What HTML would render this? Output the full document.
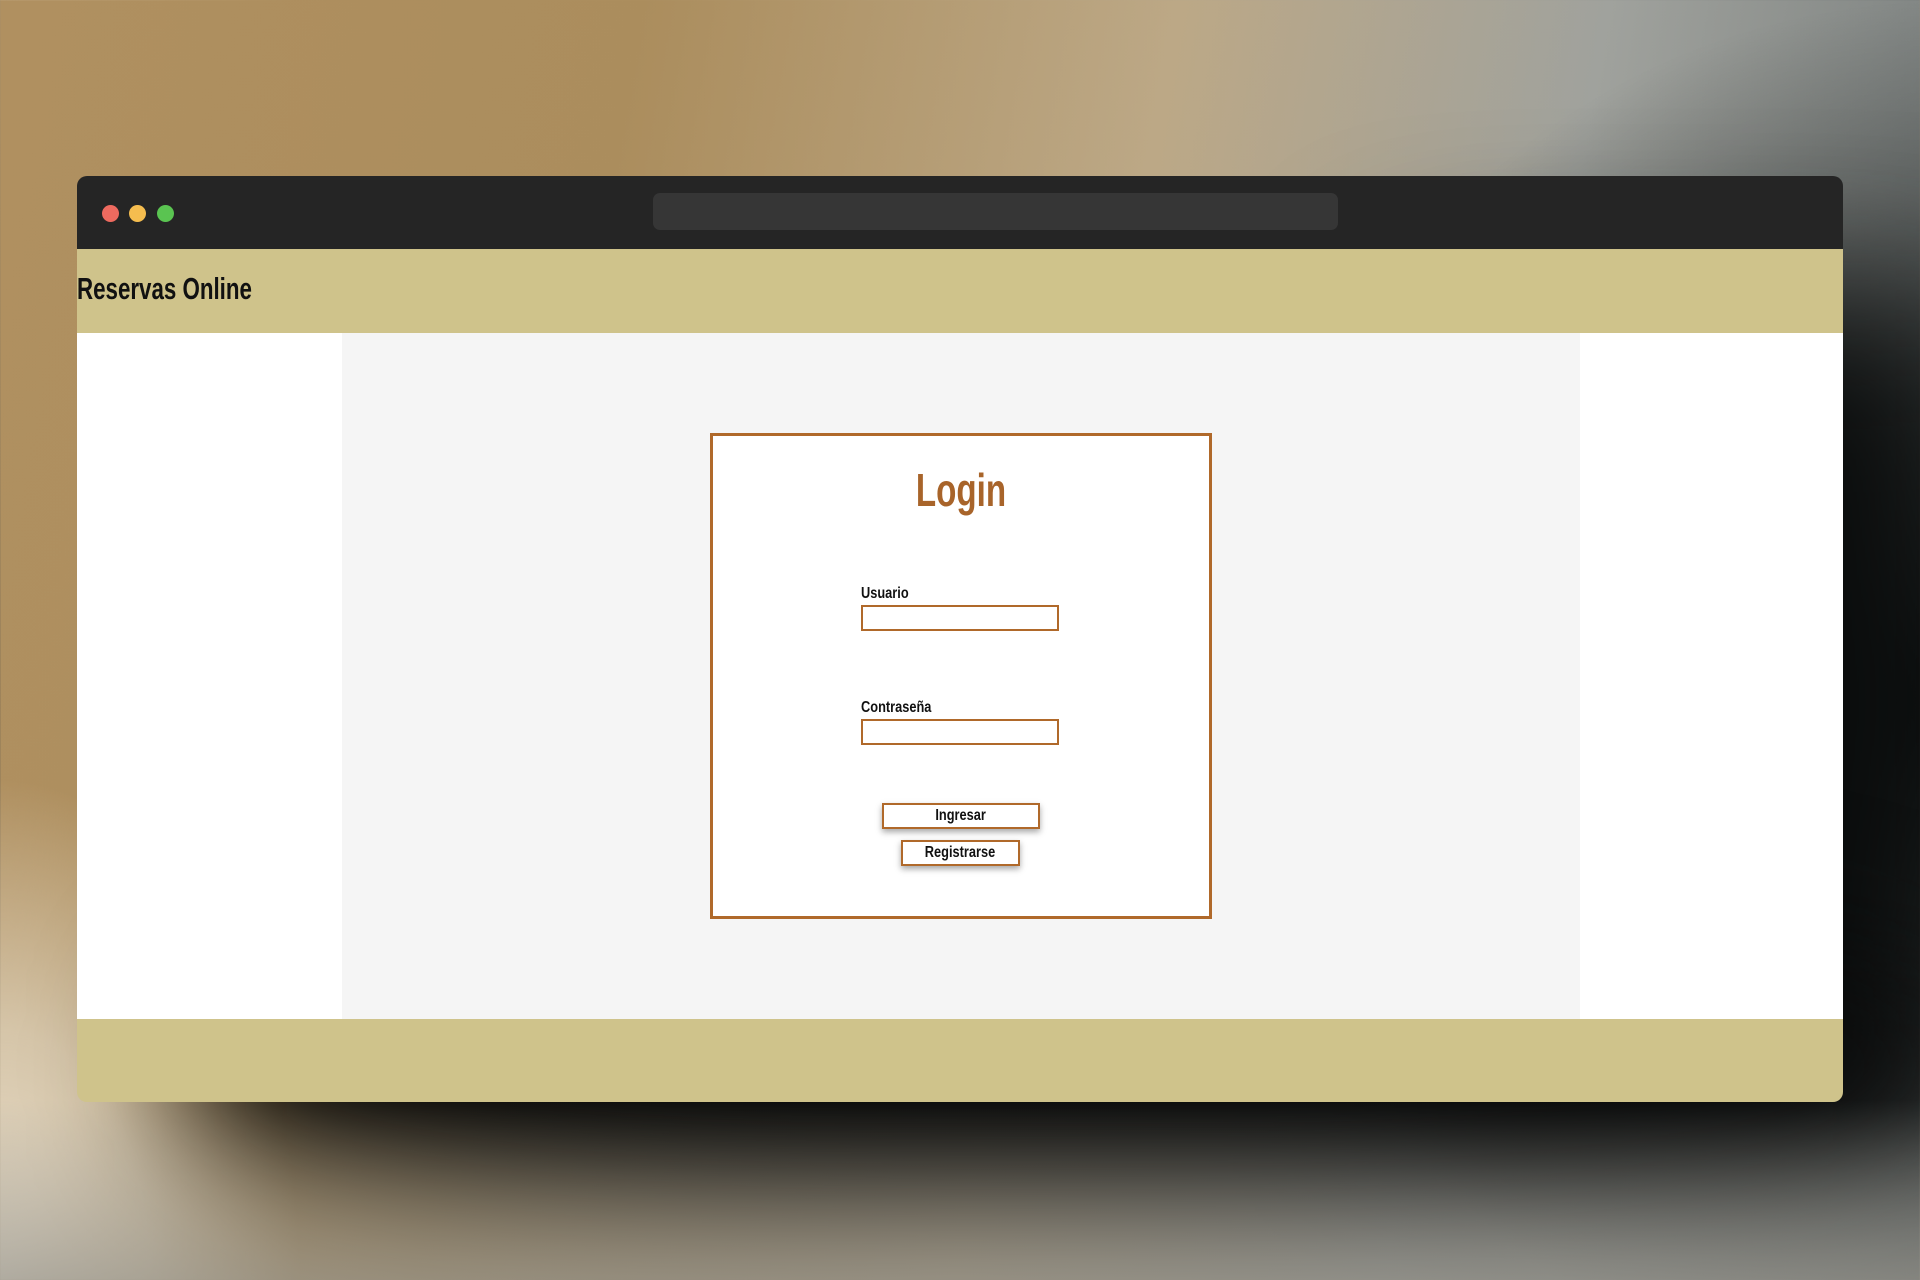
<!DOCTYPE html>
<html><head><meta charset="utf-8"><style>
html,body{margin:0;padding:0;width:1920px;height:1280px;overflow:hidden}
body{position:relative;font-family:"Liberation Sans",sans-serif;
background:
radial-gradient(ellipse 300px 500px at 0px 1280px, #ece2d0 0%, rgba(230,220,200,0.7) 50%, rgba(230,220,200,0) 100%),
radial-gradient(ellipse 700px 700px at 1950px 700px, #0c0f0f 0%, rgba(12,15,15,0) 100%),
linear-gradient(100deg,#b09060 0%,#ab8d5d 30%,#bca886 55%,#a0a29d 75%,#6e7474 100%);}
.shadow{position:absolute;left:180px;top:900px;width:1760px;height:330px;background:#080909;filter:blur(70px);border-radius:40%}
.shadow2{position:absolute;left:1400px;top:300px;width:560px;height:800px;background:#0a0c0c;filter:blur(80px)}
.fade{position:absolute;left:0;top:1100px;width:1920px;height:180px;background:linear-gradient(180deg,rgba(140,140,135,0),rgba(150,148,140,.7))}
.win{position:absolute;left:77px;top:176px;width:1766px;height:926px;border-radius:10px;overflow:hidden}
.tb{position:absolute;left:0;top:0;width:100%;height:73px;background:#252525}
.dot{position:absolute;top:29px;width:17px;height:17px;border-radius:50%}
.url{position:absolute;left:576px;top:17px;width:685px;height:37px;background:#363636;border-radius:7px}
.hd{position:absolute;left:0;top:73px;width:100%;height:84px;background:#cfc38b}
.hd span{position:absolute;left:0;top:22px;font-weight:bold;font-size:31px;color:#111;transform:scaleX(.72);transform-origin:left}
.main{position:absolute;left:0;top:157px;width:100%;height:686px;background:#fff}
.gray{position:absolute;left:265px;top:0;width:1238px;height:686px;background:#f5f5f5}
.ft{position:absolute;left:0;top:843px;width:100%;height:83px;background:#cfc38b}
.box{position:absolute;left:368px;top:100px;width:496px;height:480px;border:3px solid #b0692a;background:#fff}
h1{position:absolute;left:0;width:100%;top:27px;margin:0;text-align:center;color:#a8642a;font-size:46px;font-weight:bold;transform:scaleX(.72)}
label{position:absolute;left:148px;font-size:16px;font-weight:bold;color:#111;transform:scaleX(.8);transform-origin:left}
.in{position:absolute;left:148px;width:194px;height:22px;border:2px solid #b0692a;background:#fff}
.bt{position:absolute;height:22px;border:2px solid #b0692a;background:#fff;text-align:center;line-height:22px;box-shadow:0 3px 6px rgba(0,0,0,.35)}
.bt span{display:inline-block;font-size:16px;font-weight:bold;color:#111;transform:scaleX(.8)}
</style></head><body>
<div class="shadow2"></div>
<div class="shadow"></div>
<div class="fade"></div>
<div class="win">
 <div class="tb">
  <div class="dot" style="left:25px;background:#ee6a5f"></div>
  <div class="dot" style="left:52px;background:#f5bd4f"></div>
  <div class="dot" style="left:80px;background:#5ac451"></div>
  <div class="url"></div>
 </div>
 <div class="hd"><span>Reservas Online</span></div>
 <div class="main"><div class="gray">
  <div class="box">
   <h1>Login</h1>
   <label style="top:149px">Usuario</label>
   <div class="in" style="top:169px"></div>
   <label style="top:263px">Contraseña</label>
   <div class="in" style="top:283px"></div>
   <div class="bt" style="left:169px;top:367px;width:154px"><span>Ingresar</span></div>
   <div class="bt" style="left:188px;top:404px;width:115px"><span>Registrarse</span></div>
  </div>
 </div></div>
 <div class="ft"></div>
</div>
</body></html>
